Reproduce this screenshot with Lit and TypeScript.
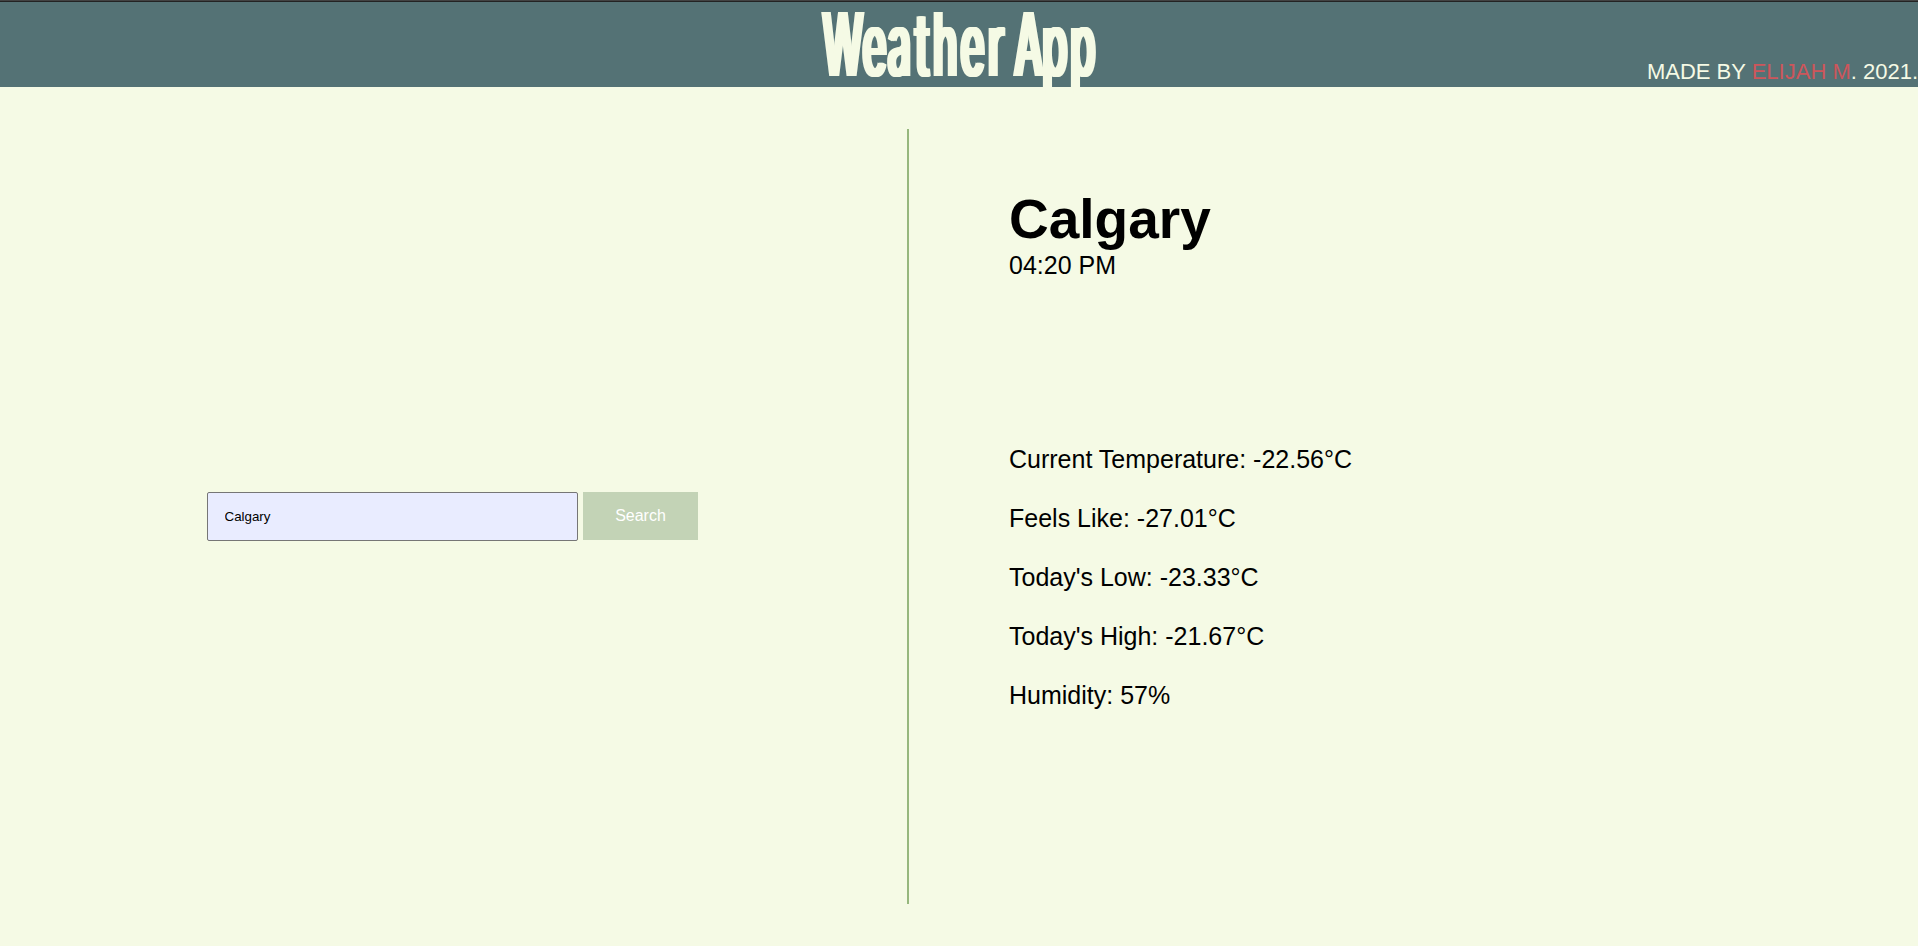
import { LitElement, html, css, svg } from "lit";
import { customElement, state } from "lit/decorators.js";

@customElement("app-header")
class AppHeader extends LitElement {
  static styles = css`
    :host { display: block; }
    .bar {
      display: grid;
      grid-template-columns: 1fr 272px 1fr;
      height: 85px;
      background: #547275;
      border-top: 1px solid #232323;
    }
    .edge { height: 1px; background: #424242; }
    .title { grid-column: 2; margin: 0; height: 85px; }
    .logo { display: block; overflow: visible; }
    .word {
      font: 500 88px Inter, sans-serif;
      fill: #f5fae5;
      text-anchor: middle;
      text-shadow: 4px 0 #f5fae5, -4px 0 #f5fae5, 2px 0 #f5fae5, -2px 0 #f5fae5;
    }
    .credit {
      margin: 0;
      align-self: end;
      justify-self: end;
      font: 22px/25px "Liberation Sans", Arial, sans-serif;
      color: #f5fae5;
      padding-bottom: 3px;
      white-space: nowrap;
    }
    .author { color: #cd565b; }
  `;
  render() {
    return html`
      <div class="edge"></div>
      <header class="bar">
        <h1 class="title">
          <svg class="logo" width="272" height="85" viewBox="0 0 272 85" aria-label="Weather App">
            ${svg`<text class="word" transform="scale(.46 1)" x="43.5 112 166 216 266 325 376 411 447 504 565" y="74">Weather App</text>`}
          </svg>
        </h1>
        <p class="credit">MADE BY <span class="author">ELIJAH M</span>. 2021.</p>
      </header>
    `;
  }
}

@customElement("city-search")
class CitySearch extends LitElement {
  static styles = css`
    :host { display: flex; align-items: center; }
    .form { display: flex; align-items: flex-start; gap: 5px; margin: 0 0 0 207px; }
    .field {
      box-sizing: border-box;
      width: 371px;
      height: 49px;
      margin: 0;
      padding: 0 16.5px;
      border: 1px solid #767676;
      border-radius: 2px;
      background: #e9ecff;
      color: #000;
      font: 13.333px "Liberation Sans", Arial, sans-serif;
    }
    .submit {
      width: 115px;
      height: 48px;
      padding: 0;
      border: 0;
      background: #c3d3b6;
      color: #fff;
      font: 16px "Liberation Sans", Arial, sans-serif;
    }
  `;
  render() {
    return html`
      <form class="form" @submit=${(e: Event) => e.preventDefault()}>
        <input class="field" .value=${"Calgary"} aria-label="City" />
        <button class="submit">Search</button>
      </form>
    `;
  }
}

@customElement("app-root")
class AppRoot extends LitElement {
  static styles = css`
    :host {
      display: flex;
      flex-direction: column;
      height: 946px;
      overflow: hidden;
      background: #f5fae5;
      color: #000;
      font: 25px/29px "Liberation Sans", Arial, sans-serif;
    }
    .main {
      flex: 1;
      display: grid;
      grid-template-columns: 907px 1fr;
      padding: 42px 0;
    }
    .report { border-left: 2px solid #96b77d; padding: 59px 0 0 100px; }
    .city { margin: 0; font-size: 55px; line-height: 63px; }
    .time { margin: 0; }
    .readings { margin: 165px 0 0; padding: 0; list-style: none; display: grid; gap: 30px; }
  `;

  @state() private readings: [string, string][] = [
    ["Current Temperature", "-22.56°C"],
    ["Feels Like", "-27.01°C"],
    ["Today's Low", "-23.33°C"],
    ["Today's High", "-21.67°C"],
    ["Humidity", "57%"],
  ];

  render() {
    return html`
      <app-header></app-header>
      <main class="main">
        <city-search></city-search>
        <section class="report">
          <h2 class="city">Calgary</h2>
          <p class="time">04:20 PM</p>
          <ul class="readings">
            ${this.readings.map(([label, value]) => html`<li>${label}: ${value}</li>`)}
          </ul>
        </section>
      </main>
    `;
  }
}
